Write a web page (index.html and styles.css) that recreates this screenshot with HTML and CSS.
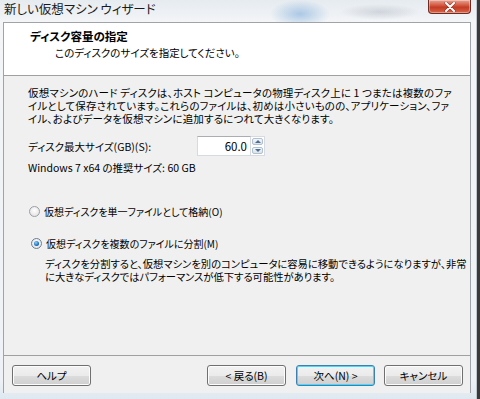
FILE: index.html
```html
<!DOCTYPE html>
<html lang="ja">
<head>
    <meta charset="UTF-8">
    <meta name="viewport" content="width=device-width, initial-scale=1.0">
    <title>新しい仮想マシン ウィザード</title>
    <link rel="stylesheet" href="styles.css">
</head>
<body>
    <div class="window">
        <div class="titlebar">
            <span class="title">新しい仮想マシン ウィザード</span>
            <button class="close-btn" aria-label="閉じる">
                <svg width="12" height="10" viewBox="0 0 12 10">
                    <path d="M2 1 L10 9 M10 1 L2 9" stroke="#5a2118" stroke-width="3.2" stroke-linecap="round" opacity="0.5"/>
                    <path d="M2 1 L10 9 M10 1 L2 9" stroke="#fff" stroke-width="2" stroke-linecap="round"/>
                </svg>
            </button>
        </div>

        <div class="client">
            <div class="wizard-header">
                <div class="header-title">ディスク容量の指定</div>
                <div class="header-sub">このディスクのサイズを指定してください。</div>
            </div>

            <div class="wizard-body">
                <p class="intro">
                    仮想マシンのハード ディスクは、ホスト コンピュータの物理ディスク上に 1 つまたは複数のファ<br>
                    イルとして保存されています。これらのファイルは、初めは小さいものの、アプリケーション、ファ<br>
                    イル、およびデータを仮想マシンに追加するにつれて大きくなります。
                </p>

                <div class="size-row">
                    <label for="diskSize">ディスク最大サイズ(GB)(S):</label>
                    <div class="spin">
                        <input type="text" id="diskSize" value="60.0">
                        <div class="spin-buttons">
                            <span class="spin-up"></span>
                            <span class="spin-down"></span>
                        </div>
                    </div>
                </div>

                <div class="recommend">Windows 7 x64 の推奨サイズ: 60 GB</div>

                <label class="radio radio-single">
                    <input type="radio" name="split">
                    <span class="radio-mark"></span>
                    仮想ディスクを単一ファイルとして格納(O)
                </label>

                <label class="radio radio-multi">
                    <input type="radio" name="split" checked>
                    <span class="radio-mark"></span>
                    仮想ディスクを複数のファイルに分割(M)
                </label>

                <p class="radio-desc">
                    ディスクを分割すると、仮想マシンを別のコンピュータに容易に移動できるようになりますが、非常<br>
                    に大きなディスクではパフォーマンスが低下する可能性があります。
                </p>
            </div>

            <div class="wizard-footer">
                <button class="btn btn-help">ヘルプ</button>
                <button class="btn">&lt; 戻る(B)</button>
                <button class="btn btn-default">次へ(N) &gt;</button>
                <button class="btn">キャンセル</button>
            </div>
        </div>
    </div>
</body>
</html>
```

FILE: styles.css
```css
body {
    margin: 0;
    width: 480px;
    height: 399px;
    overflow: hidden;
    background-color: #3a3a3a;
    font-family: "Noto Sans CJK JP", "Noto Sans", sans-serif;
    font-feature-settings: "palt";
    font-size: 10.5px;
    color: #000;
}

.window {
    width: 477px;
    height: 399px;
    display: flex;
    flex-direction: column;
    background:
        radial-gradient(ellipse 30px 14px at 300px 14px, rgba(90, 150, 210, 0.45), transparent),
        radial-gradient(ellipse 40px 8px at 380px 12px, rgba(150, 160, 175, 0.35), transparent),
        linear-gradient(#e6ebf0, #f3f5f7 22px, #eef2f6 380px, #dfe8f0);
    border-right: 1px solid #bfc6cc;
    box-sizing: border-box;
}

.titlebar {
    height: 22px;
    display: flex;
    align-items: flex-start;
    flex-shrink: 0;
}

.title {
    font-size: 12.5px;
    line-height: 17px;
    padding-left: 4px;
    color: #1a1a1a;
}

.close-btn {
    margin-left: auto;
    margin-right: 5px;
    width: 43px;
    height: 14px;
    padding: 0;
    border: 1px solid #6d2b22;
    border-top: none;
    border-radius: 0 0 4px 4px;
    background: linear-gradient(#e8a393, #d0513a 45%, #c33a22 55%, #d7674c);
    box-shadow: inset 0 0 0 1px rgba(255, 255, 255, 0.35);
    display: flex;
    align-items: center;
    justify-content: center;
}

.client {
    margin-left: 3px;
    width: 468px;
    height: 371px;
    display: flex;
    flex-direction: column;
    border: 1px solid #9ea4aa;
    border-bottom: none;
    box-sizing: border-box;
    background-color: #f0f0f0;
}

.wizard-header {
    height: 53px;
    flex-shrink: 0;
    background-color: #fff;
    border-bottom: 1px solid #a0a0a0;
    box-sizing: border-box;
}

.header-title {
    font-weight: bold;
    font-size: 11.5px;
    line-height: 14px;
    padding: 6px 0 0 26px;
}

.header-sub {
    line-height: 14px;
    padding: 3px 0 0 51px;
}

.wizard-body {
    flex: 1;
    padding: 0 0 0 24px;
}

.intro {
    margin: 10px 0 0;
    line-height: 13px;
    letter-spacing: 0.15px;
    white-space: nowrap;
}

.size-row {
    display: flex;
    align-items: center;
    height: 20px;
    margin-top: 11px;
}

.size-row label {
    width: 169px;
}

.spin {
    display: flex;
    height: 20px;
}

.spin input {
    width: 54px;
    height: 20px;
    box-sizing: border-box;
    border: 1px solid #d5dbe1;
    border-top-color: #abadb3;
    text-align: right;
    padding: 0 3px 0 0;
    font-family: inherit;
    font-size: 11.5px;
    color: #000;
    background-color: #fff;
    outline: none;
}

.spin-buttons {
    display: flex;
    flex-direction: column;
    width: 13px;
    border: 1px solid #d5dbe1;
    border-left: none;
    background-color: #fff;
}

.spin-buttons span {
    flex: 1;
    margin: 1px;
    border: 1px solid #b2bfcc;
    border-radius: 2px;
    background: linear-gradient(#f3f6f9, #dbe3ea);
    display: flex;
    align-items: center;
    justify-content: center;
}

.spin-up::after,
.spin-down::after {
    content: "";
    border-left: 3px solid transparent;
    border-right: 3px solid transparent;
}

.spin-up::after {
    border-bottom: 3px solid #4d6e93;
}

.spin-down::after {
    border-top: 3px solid #4d6e93;
}

.recommend {
    margin-top: 5px;
    line-height: 14px;
}

.radio {
    display: flex;
    align-items: center;
    height: 14px;
    gap: 4px;
    font-size: 10px;
}

.radio input {
    display: none;
}

.radio-mark {
    width: 11px;
    height: 11px;
    border-radius: 50%;
    border: 1px solid #9a9ea3;
    background: radial-gradient(circle at 50% 40%, #ffffff, #dcdcdc);
    box-sizing: border-box;
    display: flex;
    align-items: center;
    justify-content: center;
}

.radio input:checked + .radio-mark {
    border-color: #6b7f95;
}

.radio input:checked + .radio-mark::after {
    content: "";
    width: 5px;
    height: 5px;
    border-radius: 50%;
    background: radial-gradient(circle at 40% 35%, #8fd0ff, #1c6fc2 60%, #0c3f7a);
}

.radio-single {
    margin-top: 29px;
    padding-left: 1px;
}

.radio-multi {
    margin-top: 18px;
    padding-left: 3px;
}

.radio-desc {
    margin: 7px 0 0 17px;
    line-height: 13px;
    font-size: 10.3px;
    white-space: nowrap;
}

.wizard-footer {
    height: 38px;
    flex-shrink: 0;
    display: flex;
    align-items: flex-start;
    padding: 9px 7px 0 8px;
    border-top: 1px solid #a0a0a0;
    box-sizing: border-box;
}

.btn {
    width: 79px;
    height: 21px;
    padding: 0;
    font-family: inherit;
    font-feature-settings: "palt";
    font-size: 10.5px;
    color: #000;
    border: 1px solid #707070;
    border-radius: 3px;
    background: linear-gradient(#f2f2f2, #ebebeb 50%, #dddddd 50%, #cfcfcf);
    box-shadow: inset 0 0 0 1px #fcfcfc;
    margin-left: 9px;
}

.btn-help {
    margin-left: 0;
    margin-right: auto;
}

.btn-default {
    border-color: #3c7fb1;
    box-shadow: inset 0 0 0 1px #48d8fb;
    margin-left: 10px;
}
```
